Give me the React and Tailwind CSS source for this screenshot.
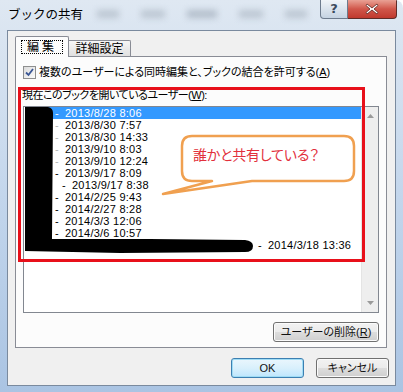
import React from "react";

const jp = "font-['Liberation_Sans','Noto_Sans_CJK_JP',sans-serif] [font-feature-settings:'palt']";

const rows = [
  { date: "2013/8/28 8:06", pad: "pl-[30px]", selected: true },
  { date: "2013/8/30 7:57", pad: "pl-[30px]", faded: true },
  { date: "2013/8/30 14:33", pad: "pl-[30px]", faded: true },
  { date: "2013/9/10 8:03", pad: "pl-[30px]", faded: true },
  { date: "2013/9/10 12:24", pad: "pl-[30px]", faded: true },
  { date: "2013/9/17 8:09", pad: "pl-[30px]" },
  { date: "2013/9/17 8:38", pad: "pl-[37px]" },
  { date: "2014/2/25 9:43", pad: "pl-[30px]" },
  { date: "2014/2/27 8:28", pad: "pl-[30px]" },
  { date: "2014/3/3 12:06", pad: "pl-[30px]" },
  { date: "2014/3/6 10:57", pad: "pl-[30px]" },
  { date: "2014/3/18 13:36", pad: "pl-[233px]" },
];

const Button = ({ children, primary, className = "" }) => (
  <div
    className={`flex items-center justify-center h-[20px] rounded-[3px] border text-[11px] text-[#111] ${jp} ${
      primary
        ? "border-[#3c7fb1] shadow-[inset_0_0_0_1px_#9fdcf5] bg-gradient-to-b from-[#eaf6fd] via-[#d9f0fc] to-[#bee6fd]"
        : "border-[#707070] shadow-[inset_0_0_0_1px_#fbfbfb] bg-[linear-gradient(#f2f2f2_0%,#ebebeb_50%,#dddddd_51%,#cfcfcf_100%)]"
    } ${className}`}
  >
    {children}
  </div>
);

export default function App() {
  return (
    <div className="relative w-[403px] h-[392px] overflow-hidden rounded-tr-[8px] bg-gradient-to-b from-[#dfe8f2] via-[#c3d6ec] to-[#aac4e3]">
      {/* title bar */}
      <div className="flex h-[30px] items-start">
        <div className="pl-[8px] pt-[6px] text-[12.5px] leading-[16px] text-black font-['Noto_Sans_CJK_JP',sans-serif]">
          ブックの共有
        </div>
        <div className="flex flex-1 gap-[22px] pl-[14px] pt-[10px] opacity-60">
          <div className="w-[22px] h-[8px] bg-[#a7b2be] blur-[3px]" />
          <div className="w-[24px] h-[8px] bg-[#a7b2be] blur-[3px]" />
          <div className="w-[30px] h-[8px] bg-[#98a4b2] blur-[3px]" />
          <div className="w-[24px] h-[8px] bg-[#a7b2be] blur-[3px]" />
          <div className="w-[22px] h-[8px] bg-[#a7b2be] blur-[3px]" />
        </div>
        <div className="flex mr-[6px]">
          <div className="flex items-center justify-center w-[28px] h-[19px] rounded-bl-[4px] border border-t-0 border-[#6d7b8d] bg-gradient-to-b from-[#f0f4f8] to-[#c5d3e2] text-[13px] font-bold text-[#3c4a5c] font-['DejaVu_Sans',sans-serif]">
            ?
          </div>
          <div className="flex items-center justify-center w-[49px] h-[19px] rounded-br-[4px] border border-l-0 border-t-0 border-[#5f2c28] bg-gradient-to-b from-[#e9a195] via-[#d0564a] to-[#c0392e]">
            <svg width="14" height="12" viewBox="0 0 14 12">
              <path d="M2 1 L7 5 L12 1 L13 2.5 L9 6 L13 9.5 L12 11 L7 7 L2 11 L1 9.5 L5 6 L1 2.5 Z" fill="#fff" stroke="#5a2420" strokeWidth="0.8" />
            </svg>
          </div>
        </div>
      </div>

      {/* client area */}
      <div className="ml-[7px] w-[389px] h-[356px] border border-[#7a8a9e] bg-[#f0f0f0] pt-[5px]">
        {/* tabs */}
        <div className="flex items-end ml-[7px]">
          <div className="relative z-10 flex items-center justify-center w-[54px] h-[21px] border border-b-0 border-[#898c95] bg-[#fcfcfc] rounded-t-[2px]">
            <span className={`border border-dotted border-black px-[5px] h-[14px] leading-[13px] text-[12px] tracking-[3px] text-black ${jp}`}>
              編集
            </span>
          </div>
          <div className={`mb-[1px] flex items-center justify-center w-[62px] h-[16px] border border-l-0 border-b-0 border-[#898c95] bg-gradient-to-b from-[#f6f6f6] to-[#e0e0e0] rounded-tr-[2px] text-[12px] leading-[14px] text-black ${jp}`}>
            詳細設定
          </div>
        </div>

        {/* tab panel */}
        <div className="-mt-[1px] ml-[7px] w-[372px] h-[292px] border border-[#898c95] bg-[#fcfcfc] px-[7px] flex flex-col">
          <div className="mt-[9px] flex items-center h-[13px]">
            <div className="w-[13px] h-[13px] border border-[#8e8f8f] bg-gradient-to-br from-[#dcdcdc] to-[#fbfbfb] flex items-center justify-center">
              <svg width="9" height="9" viewBox="0 0 9 9">
                <path d="M1 4.5 L3.5 7 L8 1" fill="none" stroke="#3b5795" strokeWidth="1.8" />
              </svg>
            </div>
            <span className={`ml-[3px] text-[11px] leading-[13px] text-black ${jp}`}>
              複数のユーザーによる同時編集と、ブックの結合を許可する(<span className="underline">A</span>)
            </span>
          </div>

          <div className={`mt-[10px] -ml-[1px] text-[11px] leading-[12px] tracking-[-0.5px] text-black ${jp}`}>
            現在このブックを開いているユーザー(<span className="underline">W</span>):
          </div>

          <div className="mt-[5px] flex h-[207px] w-[356px] border border-[#828790] bg-white">
            <div className="flex-1 pl-[1px] font-['Liberation_Sans',sans-serif] text-[11px] leading-[12px] tracking-[0.25px]">
              {rows.map((r) => (
                <div
                  key={r.date}
                  className={`h-[12px] flex items-center whitespace-nowrap ${r.pad} ${
                    r.selected ? "bg-[#3399ff] text-white" : "text-black"
                  }`}
                >
                  <span className={r.faded ? "text-[#b5b5b5]" : ""}>-</span>
                  <span className="ml-[6px]">{r.date}</span>
                </div>
              ))}
            </div>
            <div className="w-[17px] bg-[#eeeeee] border-l border-[#e4e4e4] flex flex-col justify-between items-center py-[7px]">
              <svg width="7" height="4" viewBox="0 0 7 4">
                <path d="M0 4 L3.5 0 L7 4 Z" fill="#9a9a9a" />
              </svg>
              <svg width="7" height="4" viewBox="0 0 7 4">
                <path d="M0 0 L3.5 4 L7 0 Z" fill="#9a9a9a" />
              </svg>
            </div>
          </div>

          <Button className="mt-[9px] self-end w-[106px] h-[19px]">
            ユーザーの削除(<span className="underline">R</span>)
          </Button>
        </div>

        {/* bottom buttons */}
        <div className="mt-[10px] ml-[223px] flex gap-[12px]">
          <Button primary className="w-[73px]">OK</Button>
          <Button className="w-[73px]">キャンセル</Button>
        </div>
      </div>

      {/* redaction and callout */}
      <svg className="absolute left-0 top-0" width="403" height="392" viewBox="0 0 403 392">
        <path
          d="M25 107 L48 107 Q53 108 53 113 L52 239 L150 239 L245 240 Q253 241 253 246 Q253 252 245 252 L120 253 L25 251 Z"
          fill="#000"
        />
        <path
          d="M192 136 H344 Q354 136 354 146 V171 Q354 181 344 181 H252 L163 194 L212 181 H192 Q182 181 182 171 V146 Q182 136 192 136 Z"
          fill="#fff"
          stroke="#f0a050"
          strokeWidth="2.5"
          strokeLinejoin="round"
        />
      </svg>
      <div className={`absolute left-[193px] top-[147px] text-[14px] leading-[17px] tracking-[-0.2px] text-[#e2303c] ${jp}`}>
        誰かと共有している？
      </div>

      {/* annotation box */}
      <div className="absolute left-[18px] top-[87px] w-[347px] h-[175px] border-[3px] border-[#e8101a]" />
    </div>
  );
}
